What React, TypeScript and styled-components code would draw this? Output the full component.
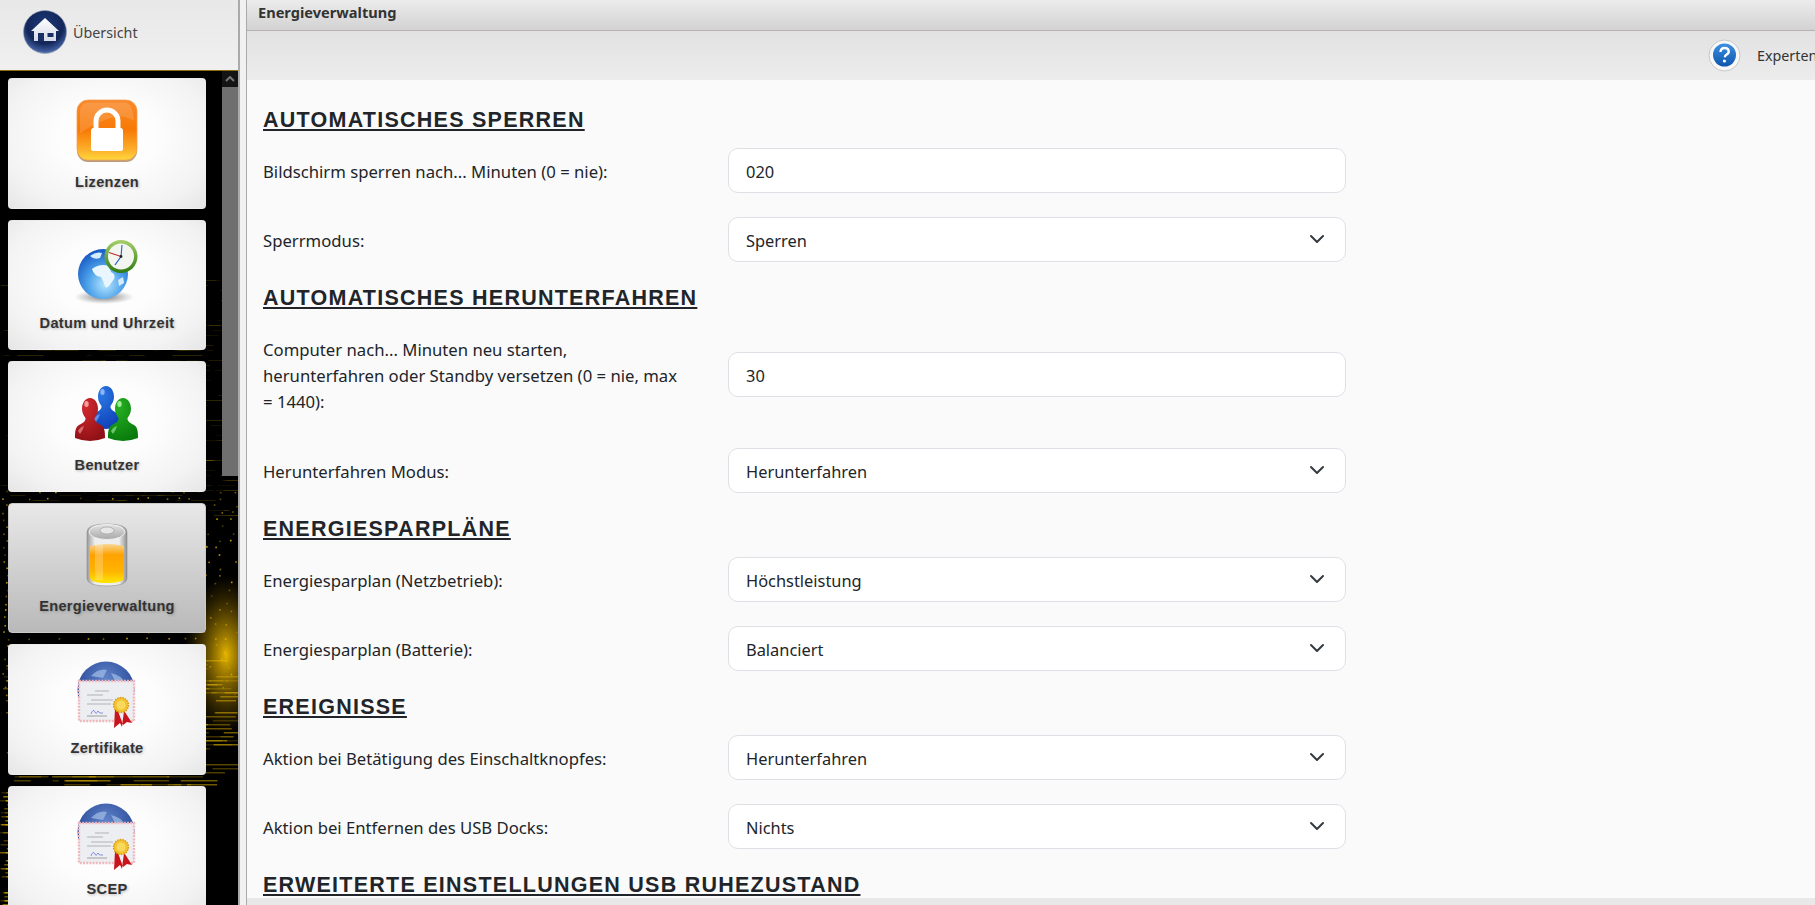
import React from 'react';
import styled, { createGlobalStyle } from 'styled-components';

const GlobalStyle = createGlobalStyle`
  html, body {
    margin: 0;
    height: 100%;
    overflow: hidden;
  }
  #root {
    height: 100%;
  }
`;

// seeded so the backdrop is the same on every load
const makeRandom = (seed: number) => () => {
  seed = (seed * 16807) % 2147483647;
  return seed / 2147483647;
};

const buildSpeckles = () => {
  const rand = makeRandom(4711);
  const items: { x: number; y: number; w: number; h: number; o: number }[] = [];
  // faint streaks in the upper part
  for (let y = 270; y < 520; y += 5) {
    for (let i = 0; i < 7; i++) {
      items.push({ x: rand() * 238, y, w: 4 + rand() * 26, h: 1, o: 0.06 + rand() * 0.14 });
    }
  }
  // dots
  for (let y = 490; y < 700; y += 7) {
    for (let x = 2 + rand() * 6; x < 238; x += 9 + rand() * 24) {
      items.push({ x, y: y + rand() * 2, w: 1.6, h: 1.6, o: 0.3 + rand() * 0.6 });
    }
  }
  // brighter stripes near the bottom
  for (let y = 660; y < 905; y += 4) {
    const span = y < 790 ? 225 : 40;
    for (let i = 0; i < 7; i++) {
      items.push({ x: rand() * span, y, w: 6 + rand() * 40, h: 1.5, o: 0.18 + rand() * 0.4 });
    }
  }
  return items;
};

const speckles = buildSpeckles();

const Page = styled.div`
  display: flex;
  width: 1815px;
  height: 905px;
  overflow: hidden;
  font-family: "Noto Sans", "Open Sans", sans-serif;
  color: #212529;
  background: #fafafa;
`;

const Sidebar = styled.aside`
  flex: 0 0 238px;
  display: flex;
  flex-direction: column;
  height: 100%;
`;

const HomeBar = styled.div`
  flex: 0 0 71px;
  display: flex;
  align-items: center;
  gap: 6px;
  padding: 0 0 6px 23px;
  box-sizing: border-box;
  background: linear-gradient(#e8e8e8, #f0f0f0);
  border-bottom: 1px solid #8a6d10;
  font-size: 14.3px;
  color: #444;
`;

const Dock = styled.div`
  position: relative;
  flex: 1;
  display: flex;
  min-height: 0;
  background: #000;
  overflow: hidden;
`;

const Backdrop = styled.svg`
  position: absolute;
  left: 0;
  top: 0;
`;

const TileList = styled.div`
  position: relative;
  flex: 1;
  display: flex;
  flex-direction: column;
  gap: 11px;
  padding: 7px 16px 0 8px;
`;

const Tile = styled.div<{ $active?: boolean }>`
  flex: 0 0 130.6px;
  box-sizing: border-box;
  display: flex;
  flex-direction: column;
  align-items: center;
  border-radius: 4px;
  border: 1px solid ${p => (p.$active ? '#c9c9c9' : 'transparent')};
  background: ${p =>
    p.$active
      ? 'linear-gradient(#e8e8e8, #b9b9b9)'
      : 'radial-gradient(ellipse at 50% 45%, #fdfdfd 35%, #f3f3f3 75%, #e6e6e6 100%)'};
`;

const TileIcon = styled.div`
  flex: 0 0 84px;
  display: flex;
  align-items: flex-end;
  justify-content: center;
`;

const TileLabel = styled.div`
  margin-top: 10.5px;
  font-family: "Liberation Sans", Arial, sans-serif;
  font-weight: 700;
  font-size: 14.6px;
  letter-spacing: 0.3px;
  color: #333;
  text-shadow: 1px 1px 3px rgba(0, 0, 0, 0.25);
`;

const ScrollTrack = styled.div`
  position: relative;
  flex: 0 0 16px;
  display: flex;
  flex-direction: column;
`;

const ScrollUp = styled.div`
  flex: 0 0 16px;
  display: flex;
  align-items: center;
  justify-content: center;
  background: #141414;
`;

const ScrollThumb = styled.div`
  flex: 0 0 389px;
  background: #6f6f6f;
`;

const Gutter = styled.div`
  flex: 0 0 6px;
  background: #f1f1f1;
  border-left: 2px solid #aaa;
  border-right: 1px solid #aaa;
`;

const Main = styled.main`
  flex: 1;
  min-width: 0;
  display: flex;
  flex-direction: column;
  height: 100%;
`;

const TitleBar = styled.div`
  flex: 0 0 31px;
  box-sizing: border-box;
  display: flex;
  align-items: center;
  padding: 0 0 7px 11px;
  background: linear-gradient(#ececec, #d2d2d2);
  border-bottom: 1px solid #b9b2b2;
  font-size: 14.6px;
  font-weight: 700;
  color: #333;
`;

const ToolBar = styled.div`
  flex: 0 0 49px;
  display: flex;
  align-items: center;
  justify-content: flex-end;
  gap: 16px;
  overflow: hidden;
  background: linear-gradient(#e2e2e2, #ececec);
  font-size: 14.3px;
  color: #333;
`;

const ExpertText = styled.span`
  flex: 0 0 58px;
  white-space: nowrap;
  overflow: hidden;
`;

const Content = styled.div`
  flex: 1;
  min-height: 0;
  padding: 28px 0 0 16px;
  overflow: hidden;
  background: #fafafa;
`;

const Heading = styled.h2`
  margin: 0 0 15px;
  font-family: "Liberation Sans", Arial, sans-serif;
  font-size: 21.5px;
  line-height: 24px;
  font-weight: 700;
  letter-spacing: 1.25px;
  text-transform: uppercase;
  text-decoration: underline;
  text-decoration-thickness: 1.5px;
  text-underline-offset: 2px;
  color: #212529;
  & ~ & {
    padding-top: 1px;
  }
`;

const Row = styled.div<{ $tall?: boolean }>`
  display: grid;
  grid-template-columns: 465px 618px;
  align-items: center;
  margin-bottom: ${p => (p.$tall ? '24px' : '23px')};
`;

const Label = styled.label`
  box-sizing: border-box;
  padding: 12px 40px 8px 0;
  font-size: 16.7px;
  line-height: 26px;
  color: #212529;
`;

const TextField = styled.input`
  box-sizing: border-box;
  width: 100%;
  height: 45px;
  padding: 2px 17px 0;
  font: inherit;
  font-size: 16.4px;
  color: #212529;
  background: #fff;
  border: 1px solid #dfe0e6;
  border-radius: 10px;
  outline: none;
`;

const arrow = `url("data:image/svg+xml,%3csvg xmlns='http://www.w3.org/2000/svg' viewBox='0 0 16 16'%3e%3cpath fill='none' stroke='%23343a40' stroke-linecap='round' stroke-linejoin='round' stroke-width='2' d='m2 5 6 6 6-6'/%3e%3c/svg%3e")`;

const SelectField = styled.select`
  box-sizing: border-box;
  width: 100%;
  height: 45px;
  padding: 2px 40px 0 17px;
  font: inherit;
  font-size: 16.4px;
  color: #212529;
  border: 1px solid #dfe0e6;
  border-radius: 10px;
  outline: none;
  appearance: none;
  background: #fff ${arrow} no-repeat right 20px center / 16px 16px;
`;

const HomeIcon = () => (
  <svg width="44" height="44" viewBox="0 0 44 44">
    <defs>
      <radialGradient id="homeBall" cx="50%" cy="35%" r="70%">
        <stop offset="0" stopColor="#1d3a78" />
        <stop offset="0.6" stopColor="#13265a" />
        <stop offset="0.86" stopColor="#3f5c9c" />
        <stop offset="1" stopColor="#a8b6d2" />
      </radialGradient>
      <linearGradient id="homeWall" x1="0" y1="0" x2="0" y2="1">
        <stop offset="0" stopColor="#ffffff" />
        <stop offset="1" stopColor="#d5dbe6" />
      </linearGradient>
    </defs>
    <circle cx="22" cy="22" r="21.5" fill="url(#homeBall)" stroke="#8d98ad" strokeWidth="0.6" />
    <path d="M22 8 L36 21 L33 21 L33 31 L11 31 L11 21 L8 21 Z" fill="url(#homeWall)" />
    <rect x="15" y="23" width="6" height="8" fill="#1a2f63" />
    <rect x="24.5" y="23" width="6" height="4" fill="#1a2f63" />
  </svg>
);

const LockIcon = () => (
  <svg width="62" height="64" viewBox="0 0 62 64">
    <defs>
      <linearGradient id="lockBody" x1="0" y1="0" x2="0" y2="1">
        <stop offset="0" stopColor="#f9892a" />
        <stop offset="0.5" stopColor="#f87a05" />
        <stop offset="0.82" stopColor="#fcae2a" />
        <stop offset="1" stopColor="#ffd83a" />
      </linearGradient>
    </defs>
    <rect x="1" y="3" width="60" height="60" rx="11" fill="#8f5c24" opacity="0.6" />
    <rect x="1" y="1" width="60" height="60" rx="11" fill="url(#lockBody)" stroke="#f0a25a" strokeWidth="0.8" />
    <path d="M4 13 Q4 3.500 13 3.500 H48 Q57 3.500 58 22 Q44 12 22 24 Q10 30 4 34 Z" fill="#fff" opacity="0.14" />
    <path d="M20 30 V22 a11 11 0 0 1 22 0 V30" fill="none" stroke="#fff" strokeWidth="5" />
    <rect x="15" y="29" width="32" height="23" rx="2.5" fill="#fff" />
  </svg>
);

const GlobeClockIcon = () => (
  <svg width="62" height="66" viewBox="0 0 62 66">
    <defs>
      <radialGradient id="globeSea" cx="55%" cy="70%" r="70%">
        <stop offset="0" stopColor="#b8e6ff" />
        <stop offset="0.5" stopColor="#4ea3ea" />
        <stop offset="1" stopColor="#1659c4" />
      </radialGradient>
      <radialGradient id="globeShade" cx="50%" cy="50%" r="50%">
        <stop offset="0" stopColor="#555" stopOpacity="0.8" />
        <stop offset="1" stopColor="#777" stopOpacity="0" />
      </radialGradient>
      <linearGradient id="clockRim" x1="0" y1="0" x2="0" y2="1">
        <stop offset="0" stopColor="#a6d06a" />
        <stop offset="1" stopColor="#2f7a12" />
      </linearGradient>
    </defs>
    <ellipse cx="28" cy="58" rx="30" ry="7" fill="url(#globeShade)" />
    <circle cx="27" cy="35" r="25" fill="url(#globeSea)" />
    <path d="M16 30 q8 -6 17 -3 l2 6 q5 2 3 7 l-5 7 q-4 4 -5 -3 l-3 -6 q-7 -1 -9 -8 Z" fill="#eaf6ff" />
    <path d="M14 17 q6 -5 12 -3 l-2 5 q-6 2 -10 -2 Z" fill="#d5ecfd" />
    <path d="M42 41 l5 -3 l1 6 l-5 3 Z" fill="#d5ecfd" />
    <circle cx="45" cy="17.5" r="16.5" fill="url(#clockRim)" />
    <circle cx="45" cy="17.5" r="13" fill="#f3f5f1" />
    <path d="M45 17.5 L33 13.5" stroke="#c22f2f" strokeWidth="1.1" />
    <path d="M45 17.5 L39 26" stroke="#2b5fd0" strokeWidth="1.3" />
    <path d="M45 17.5 L46 6" stroke="#2b5fd0" strokeWidth="1.1" />
    <circle cx="45" cy="17.5" r="1.4" fill="#222" />
  </svg>
);

const Person = ({ x, y, id, dark, mid, light }: { x: number; y: number; id: string; dark: string; mid: string; light: string }) => (
  <g transform={`translate(${x} ${y})`}>
    <defs>
      <radialGradient id={id} cx="35%" cy="20%" r="85%">
        <stop offset="0" stopColor={mid} />
        <stop offset="1" stopColor={dark} />
      </radialGradient>
    </defs>
    <path
      d="M0 0 C5 0 8 5 8 11 C8 15 6 18 4.500 20 C4 23 7 25 11 27 C15 29 15 35 15 40 Q0 46 -15 40 C-15 35 -15 29 -11 27 C-7 25 -4 23 -4.500 20 C-6 18 -8 15 -8 11 C-8 5 -5 0 0 0 Z"
      fill={`url(#${id})`}
    />
    <ellipse cx="-3.500" cy="6" rx="2.200" ry="3" fill={light} opacity="0.85" />
    <path d="M-12 33 Q-10 29 -6 28 Q-7 32 -10 36 Z" fill={light} opacity="0.55" />
  </g>
);

const UsersIcon = () => (
  <svg width="68" height="60" viewBox="0 0 68 60">
    <Person x={33} y={0} id="userBlue" dark="#0f3fb8" mid="#2a78e2" light="#9fc0ff" />
    <Person x={17} y={12} id="userRed" dark="#8f1015" mid="#d12a2f" light="#ffb0b0" />
    <Person x={50} y={12} id="userGreen" dark="#087a0c" mid="#26b022" light="#b6f8ae" />
  </svg>
);

const BatteryIcon = () => (
  <svg width="42" height="66" viewBox="0 0 42 66">
    <defs>
      <linearGradient id="batFill" x1="0" y1="0" x2="0" y2="1">
        <stop offset="0" stopColor="#f8d692" />
        <stop offset="0.28" stopColor="#ffa200" />
        <stop offset="0.7" stopColor="#ffb400" />
        <stop offset="1" stopColor="#ffe600" />
      </linearGradient>
      <linearGradient id="batGlass" x1="0" y1="0" x2="1" y2="0">
        <stop offset="0" stopColor="#9a9a9a" />
        <stop offset="0.2" stopColor="#eeeeee" />
        <stop offset="0.8" stopColor="#eeeeee" />
        <stop offset="1" stopColor="#8f8f8f" />
      </linearGradient>
      <linearGradient id="batCap" x1="0" y1="0" x2="0" y2="1">
        <stop offset="0" stopColor="#e2e2e2" />
        <stop offset="1" stopColor="#a8a8a8" />
      </linearGradient>
    </defs>
    <path d="M1 10 Q1 2 21 2 Q41 2 41 10 V56 Q41 64 21 64 Q1 64 1 56 Z" fill="url(#batGlass)" stroke="#8a8a8a" strokeWidth="0.6" />
    <path d="M4 24 Q21 20 38 24 V55 Q38 61 21 61 Q4 61 4 55 Z" fill="url(#batFill)" />
    <rect x="9" y="22" width="8" height="36" fill="#fff" opacity="0.22" />
    <ellipse cx="21" cy="10" rx="18" ry="7.500" fill="url(#batCap)" stroke="#eeeeee" />
    <ellipse cx="21" cy="8.500" rx="7" ry="3.500" fill="#e7e7e7" stroke="#9f9f9f" strokeWidth="0.7" />
  </svg>
);

const CertIcon = () => (
  <svg width="60" height="68" viewBox="0 0 60 68">
    <defs>
      <radialGradient id="certGlobe" cx="50%" cy="30%" r="70%">
        <stop offset="0" stopColor="#5f83c8" />
        <stop offset="1" stopColor="#1d3b8c" />
      </radialGradient>
    </defs>
    <circle cx="29" cy="29" r="28.500" fill="url(#certGlobe)" />
    <path d="M14 15 q8 -8 16 -6 l-4 8 Z M34 12 q10 2 14 10 l-8 2 Z" fill="#9db9e4" opacity="0.75" />
    <rect x="2" y="20" width="55" height="40" fill="#edeef2" stroke="#f0b8bd" strokeWidth="2.400" strokeDasharray="2 1.200" />
    <g stroke="#9a9a9a" strokeWidth="0.7">
      <path d="M18 30 H32 M10 34 H26 M14 39 H36 M10 43 H34" />
    </g>
    <path d="M10 55 H30" stroke="#8a8a8a" strokeWidth="0.8" />
    <path d="M14 53 q2 -6 4 -2 q1 3 3 -1 q1 3 5 2" stroke="#6a76d8" strokeWidth="0.8" fill="none" />
    <path d="M38 48 L37 67 L43 62 L45 66 L47 50 Z M46 48 L55 62 L50 61 L46 64 L41 50 Z" fill="#c9141b" />
    <circle cx="44" cy="44" r="7.500" fill="#f2c230" stroke="#d99a14" strokeWidth="1.400" strokeDasharray="1.600 1" />
    <circle cx="44" cy="44" r="4.500" fill="#f8d95e" />
  </svg>
);

const HelpIcon = () => (
  <svg width="33" height="33" viewBox="0 0 33 33">
    <defs>
      <linearGradient id="helpBall" x1="0" y1="0" x2="0" y2="1">
        <stop offset="0" stopColor="#3c8fe0" />
        <stop offset="1" stopColor="#0f56ad" />
      </linearGradient>
    </defs>
    <circle cx="16.500" cy="16.500" r="15.500" fill="#f7f7f7" stroke="#c8c8c8" />
    <circle cx="16.500" cy="16" r="11.500" fill="url(#helpBall)" />
    <path d="M12.500 13 q0 -4 4 -4 q4.200 0 4.200 3.400 q0 2.200 -2.400 3.400 q-1.400 0.7 -1.400 2.400" fill="none" stroke="#fff" strokeWidth="2.400" />
    <circle cx="16.400" cy="22" r="1.600" fill="#fff" />
  </svg>
);

const tiles = [
  { label: 'Lizenzen', icon: <LockIcon /> },
  { label: 'Datum und Uhrzeit', icon: <GlobeClockIcon /> },
  { label: 'Benutzer', icon: <UsersIcon /> },
  { label: 'Energieverwaltung', icon: <BatteryIcon />, active: true },
  { label: 'Zertifikate', icon: <CertIcon /> },
  { label: 'SCEP', icon: <CertIcon /> },
];

const Choice = ({ value }: { value: string }) => (
  <SelectField defaultValue={value}>
    <option>{value}</option>
  </SelectField>
);

export default function App(): JSX.Element {
  return (
    <Page>
      <GlobalStyle />
      <Sidebar>
        <HomeBar>
          <HomeIcon />
          Übersicht
        </HomeBar>
        <Dock>
          <Backdrop width="238" height="834" viewBox="0 71 238 834">
            <defs>
              <radialGradient id="glow" cx="50%" cy="50%" r="50%">
                <stop offset="0" stopColor="#ffc800" stopOpacity="0.9" />
                <stop offset="0.5" stopColor="#c79a00" stopOpacity="0.45" />
                <stop offset="1" stopColor="#806000" stopOpacity="0" />
              </radialGradient>
            </defs>
            {speckles.map((s, i) => (
              <rect key={i} x={s.x} y={s.y} width={s.w} height={s.h} fill="#e2b400" opacity={s.o} />
            ))}
            <ellipse cx="226" cy="655" rx="42" ry="80" fill="url(#glow)" />
          </Backdrop>
          <TileList>
            {tiles.map(t => (
              <Tile key={t.label} $active={t.active}>
                <TileIcon>{t.icon}</TileIcon>
                <TileLabel>{t.label}</TileLabel>
              </Tile>
            ))}
          </TileList>
          <ScrollTrack>
            <ScrollUp>
              <svg width="10" height="6" viewBox="0 0 10 6">
                <path d="M1 5 L5 1 L9 5" fill="none" stroke="#777" strokeWidth="2" />
              </svg>
            </ScrollUp>
            <ScrollThumb />
          </ScrollTrack>
        </Dock>
      </Sidebar>
      <Gutter />
      <Main>
        <TitleBar>Energieverwaltung</TitleBar>
        <ToolBar>
          <HelpIcon />
          <ExpertText>Experten</ExpertText>
        </ToolBar>
        <Content>
          <Heading>Automatisches Sperren</Heading>
          <Row>
            <Label>Bildschirm sperren nach... Minuten (0 = nie):</Label>
            <TextField defaultValue="020" />
          </Row>
          <Row>
            <Label>Sperrmodus:</Label>
            <Choice value="Sperren" />
          </Row>
          <Heading>Automatisches Herunterfahren</Heading>
          <Row $tall>
            <Label>Computer nach... Minuten neu starten, herunterfahren oder Standby versetzen (0 = nie, max = 1440):</Label>
            <TextField defaultValue="30" />
          </Row>
          <Row>
            <Label>Herunterfahren Modus:</Label>
            <Choice value="Herunterfahren" />
          </Row>
          <Heading>Energiesparpläne</Heading>
          <Row>
            <Label>Energiesparplan (Netzbetrieb):</Label>
            <Choice value="Höchstleistung" />
          </Row>
          <Row>
            <Label>Energiesparplan (Batterie):</Label>
            <Choice value="Balanciert" />
          </Row>
          <Heading>Ereignisse</Heading>
          <Row>
            <Label>Aktion bei Betätigung des Einschaltknopfes:</Label>
            <Choice value="Herunterfahren" />
          </Row>
          <Row>
            <Label>Aktion bei Entfernen des USB Docks:</Label>
            <Choice value="Nichts" />
          </Row>
          <Heading>Erweiterte Einstellungen USB Ruhezustand</Heading>
        </Content>
        <BottomBar />
      </Main>
    </Page>
  );
}

const BottomBar = styled.div`
  flex: 0 0 7px;
  background: #e8e8e8;
`;
